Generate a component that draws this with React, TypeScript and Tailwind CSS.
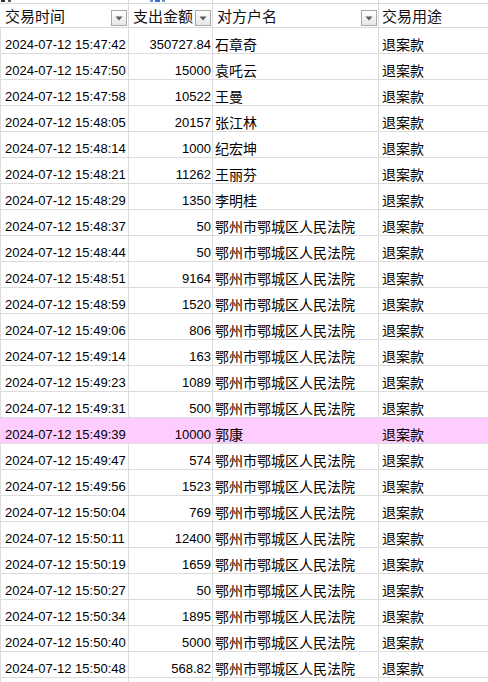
import React from 'react';

interface Txn {
  time: string;
  amount: string;
  payee: string;
  highlight?: boolean;
}

const COURT = '鄂州市鄂城区人民法院';

const rows: Txn[] = [
  { time: '2024-07-12 15:47:42', amount: '350727.84', payee: '石章奇' },
  { time: '2024-07-12 15:47:50', amount: '15000', payee: '袁吒云' },
  { time: '2024-07-12 15:47:58', amount: '10522', payee: '王曼' },
  { time: '2024-07-12 15:48:05', amount: '20157', payee: '张江林' },
  { time: '2024-07-12 15:48:14', amount: '1000', payee: '纪宏坤' },
  { time: '2024-07-12 15:48:21', amount: '11262', payee: '王丽芬' },
  { time: '2024-07-12 15:48:29', amount: '1350', payee: '李明桂' },
  { time: '2024-07-12 15:48:37', amount: '50', payee: COURT },
  { time: '2024-07-12 15:48:44', amount: '50', payee: COURT },
  { time: '2024-07-12 15:48:51', amount: '9164', payee: COURT },
  { time: '2024-07-12 15:48:59', amount: '1520', payee: COURT },
  { time: '2024-07-12 15:49:06', amount: '806', payee: COURT },
  { time: '2024-07-12 15:49:14', amount: '163', payee: COURT },
  { time: '2024-07-12 15:49:23', amount: '1089', payee: COURT },
  { time: '2024-07-12 15:49:31', amount: '500', payee: COURT },
  { time: '2024-07-12 15:49:39', amount: '10000', payee: '郭康', highlight: true },
  { time: '2024-07-12 15:49:47', amount: '574', payee: COURT },
  { time: '2024-07-12 15:49:56', amount: '1523', payee: COURT },
  { time: '2024-07-12 15:50:04', amount: '769', payee: COURT },
  { time: '2024-07-12 15:50:11', amount: '12400', payee: COURT },
  { time: '2024-07-12 15:50:19', amount: '1659', payee: COURT },
  { time: '2024-07-12 15:50:27', amount: '50', payee: COURT },
  { time: '2024-07-12 15:50:34', amount: '1895', payee: COURT },
  { time: '2024-07-12 15:50:40', amount: '5000', payee: COURT },
  { time: '2024-07-12 15:50:48', amount: '568.82', payee: COURT },
];

const latin = "font-['Liberation_Sans','Arial',sans-serif]";
const cjk = "font-['Noto_Sans_CJK_SC','Noto_Sans',sans-serif]";
const cols = 'grid grid-cols-[129px_84px_166px_1fr]';

// Excel autofilter dropdown button
const FilterButton: React.FC = () => (
  <span className="flex h-[16px] w-[16px] shrink-0 items-center justify-center border border-[#a9a9a9] bg-gradient-to-b from-white to-[#e6e6e6]">
    <svg width="8" height="5" viewBox="0 0 8 5">
      <path d="M0.5 0.5 L7.5 0.5 L4 4.5 Z" fill="#5a5a5a" />
    </svg>
  </span>
);

const HeaderCell: React.FC<{ label: string; filter?: boolean; first?: boolean }> = ({ label, filter, first }) => (
  <div className={`flex items-end justify-between border-r border-[#d9d9d9] pl-[4px] pr-[1px] pb-[1px] ${first ? 'border-l border-l-white' : ''}`}>
    <span className={`${cjk} self-center text-[15px] leading-[18px] text-[#111] pt-[2px]`}>{label}</span>
    {filter && <FilterButton />}
  </div>
);

export default function App() {
  return (
    <div className="h-[682px] w-[488px] overflow-hidden bg-white">
      {/* row above the header, scrolled out of view: only glyph feet show */}
      <div className={`${cols} h-[4px] border-b border-[#d9d9d9]`}>
        <div className="flex items-start gap-[3px] border-r border-[#d9d9d9] pl-[1px]">
          <span className="h-[2px] w-[4px] bg-[#333]" />
          <span className="h-[2px] w-[3px] bg-[#555]" />
        </div>
        <div className="flex items-start gap-[2px] border-r border-[#d9d9d9] pl-[21px]">
          <span className="h-[2px] w-[3px] bg-[#6b8fd6]" />
          <span className="h-[2px] w-[5px] bg-[#3a6fd8]" />
          <span className="h-[2px] w-[3px] bg-[#6b8fd6]" />
        </div>
        <div className="border-r border-[#d9d9d9]" />
        <div />
      </div>

      {/* header */}
      <div className={`${cols} h-[24px] border-b border-[#d9d9d9]`}>
        <HeaderCell label="交易时间" filter first />
        <HeaderCell label="支出金额" filter />
        <HeaderCell label="对方户名" filter />
        <div className="flex items-center pl-[3px] pb-[1px]">
          <span className={`${cjk} text-[15px] leading-[18px] text-[#111] pt-[2px]`}>交易用途</span>
        </div>
      </div>

      {rows.map((r) => {
        const line = r.highlight ? 'border-[#ffccff]' : 'border-[#dcdcdc]';
        return (
          <div
            key={r.time}
            className={`${cols} h-[26px] border-b border-[#dcdcdc] ${r.highlight ? 'bg-[#ffccff]' : ''}`}
          >
            <div className={`flex items-end border-l border-r ${line} pl-[4px] pb-[1px]`}>
              <span className={`${latin} text-[13px] leading-[15px] text-black`}>{r.time}</span>
            </div>
            <div className={`flex items-end justify-end border-r ${line} pr-[1px] pb-[1px]`}>
              <span className={`${latin} text-[13px] leading-[15px] text-black`}>{r.amount}</span>
            </div>
            <div className={`flex items-end border-r ${line} pl-[2px] pb-[1px]`}>
              <span className={`${cjk} text-[14px] leading-[16px] text-black`}>{r.payee}</span>
            </div>
            <div className="flex items-end pl-[3px] pb-[1px]">
              <span className={`${cjk} text-[14px] leading-[16px] text-black`}>退案款</span>
            </div>
          </div>
        );
      })}

      <div className={`${cols} h-[10px]`}>
        <div className="border-l border-r border-[#dcdcdc]" />
        <div className="border-r border-[#dcdcdc]" />
        <div className="border-r border-[#dcdcdc]" />
        <div />
      </div>
    </div>
  );
}
